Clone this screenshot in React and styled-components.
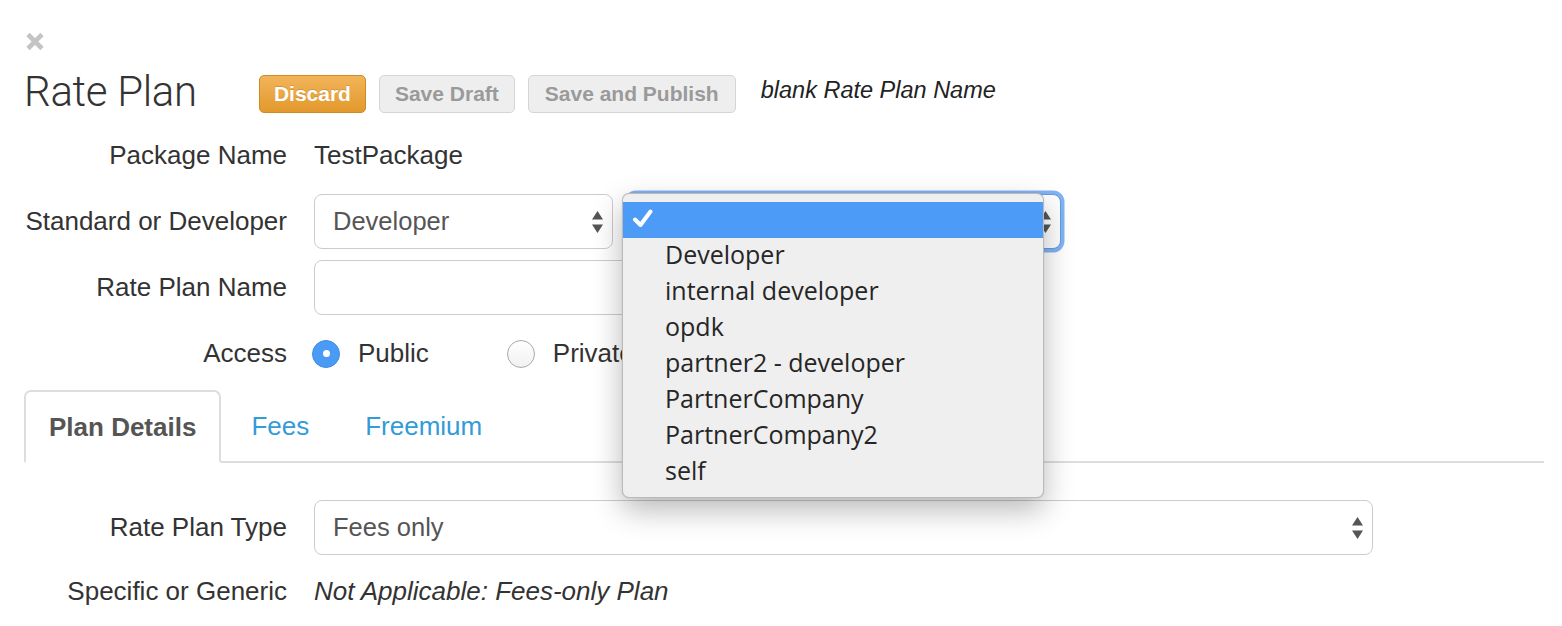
import React from 'react';
import styled, { createGlobalStyle } from 'styled-components';

const GlobalStyle = createGlobalStyle`
  html, body { margin: 0; padding: 0; background: #fff; }
  body { font-family: "Liberation Sans", Arial, sans-serif; color: #333; }
  * { box-sizing: border-box; }
`;

const Page = styled.div`
  position: relative;
  width: 1562px;
  height: 626px;
  overflow: hidden;
  padding: 0 18px 0 24px;
  background: #fff;
`;

const CloseButton = styled.div`
  margin-top: 32px;
  margin-left: 1px;
  width: 20px;
  height: 19px;
  display: block;
  svg { display: block; }
`;

const Header = styled.div`
  margin-top: 24px;
  display: flex;
  align-items: center;
  height: 38px;
`;

const Title = styled.h1`
  margin: 0 62px 0 0;
  font-family: Roboto, "Liberation Sans", sans-serif;
  font-weight: 300;
  font-size: 42px;
  line-height: 38px;
  color: #333;
  letter-spacing: -0.3px;
  position: relative;
  top: -2px;
`;

const Button = styled.button`
  height: 38px;
  padding: 0 ${(p) => p.$pad || 14}px;
  margin-right: 13px;
  border-radius: 5px;
  font-family: "Liberation Sans", Arial, sans-serif;
  font-weight: bold;
  font-size: 21px;
  cursor: pointer;
  ${(p) =>
    p.$variant === 'warning'
      ? `
    background: linear-gradient(#f2b45a, #e3992c);
    border: 1px solid #cf8a24;
    color: #fff;
    text-shadow: 0 -1px 0 rgba(0,0,0,0.15);
  `
      : `
    background: #eeeeee;
    border: 1px solid #d2d6da;
    color: #9a9a9a;
  `}
`;

const Message = styled.span`
  margin-left: 12px;
  font-style: italic;
  font-size: 23.5px;
  color: #222;
  position: relative;
  top: -4px;
`;

const FormGrid = styled.div`
  display: grid;
  grid-template-columns: 263px 1fr;
  column-gap: 27px;
  row-gap: 11px;
  grid-auto-rows: ${(p) => p.$rows || '55px'};
  align-items: center;
  margin-top: ${(p) => p.$top || '0px'};
`;

const Label = styled.div`
  text-align: right;
  font-size: 26px;
  color: #333;
  white-space: nowrap;
`;

const Value = styled.div`
  font-size: 26px;
  color: #333;
  font-style: ${(p) => (p.$italic ? 'italic' : 'normal')};
  white-space: nowrap;
`;

const ControlRow = styled.div`
  display: flex;
  align-items: center;
  gap: 15px;
`;

const SelectBox = styled.div`
  width: ${(p) => p.$width}px;
  height: 55px;
  border: 1px solid ${(p) => (p.$focused ? '#5f9deb' : '#cccccc')};
  border-radius: 8px;
  background: #fff;
  display: flex;
  align-items: center;
  justify-content: space-between;
  padding: 0 8px 0 18px;
  font-size: 25.5px;
  color: #555;
  box-shadow: ${(p) => (p.$focused ? '0 0 0 3.5px rgba(100,160,240,0.8)' : 'none')};
  svg { display: block; flex: none; }
`;

const TextInput = styled.div`
  width: ${(p) => p.$width}px;
  height: 55px;
  border: 1px solid #cccccc;
  border-radius: 8px;
  background: #fff;
`;

const RadioGroup = styled.div`
  display: flex;
  align-items: center;
  margin-left: -2px;
`;

const RadioOption = styled.label`
  display: flex;
  align-items: center;
  gap: 18px;
  margin-right: 78px;
  font-size: 26px;
  color: #333;
`;

const RadioCircle = styled.span`
  width: 28px;
  height: 28px;
  border-radius: 50%;
  display: flex;
  align-items: center;
  justify-content: center;
  ${(p) =>
    p.$checked
      ? `
    background: #4a9bf5;
    border: 1px solid #3f8de6;
  `
      : `
    background: linear-gradient(#ffffff, #f1f1f1);
    border: 1px solid #a9a9a9;
  `}
  &::after {
    content: '';
    width: 7px;
    height: 7px;
    border-radius: 50%;
    background: #fff;
    display: ${(p) => (p.$checked ? 'block' : 'none')};
  }
`;

const TabBar = styled.div`
  margin-top: 9px;
  display: flex;
  align-items: flex-end;
  height: 73px;
  border-bottom: 2px solid #dddddd;
`;

const Tab = styled.div`
  height: 73px;
  margin-right: 4px;
  margin-bottom: -2px;
  display: flex;
  align-items: center;
  font-size: 26px;
  border-radius: 7px 7px 0 0;
  ${(p) =>
    p.$active
      ? `
    padding: 2px 23px 0;
    border: 2px solid #dddddd;
    border-bottom-color: #fff;
    background: #fff;
    color: #555;
    font-weight: bold;
  `
      : `
    padding: 0 24px;
    border: 2px solid transparent;
    color: #339bd8;
  `}
`;

const Dropdown = styled.div`
  position: absolute;
  left: 622px;
  top: 193px;
  width: 422px;
  height: 305px;
  background: #efefef;
  border: 1px solid rgba(0, 0, 0, 0.22);
  border-radius: 7px;
  box-shadow: 0 12px 30px rgba(0, 0, 0, 0.28), 0 0 2px rgba(0, 0, 0, 0.1);
  padding: 8px 0;
  overflow: hidden;
`;

const MenuItem = styled.div`
  position: relative;
  height: 36px;
  display: flex;
  align-items: center;
  padding-left: 42px;
  padding-bottom: 4px;
  font-family: "Open Sans", "Liberation Sans", sans-serif;
  font-size: 25px;
  color: ${(p) => (p.$selected ? '#fff' : '#262626')};
  background: ${(p) => (p.$selected ? '#4b9bf7' : 'transparent')};
  svg {
    position: absolute;
    left: 9px;
    top: 7px;
  }
`;

const Arrows = () => (
  <svg width="13" height="26" viewBox="0 0 13 26">
    <path d="M6.5 2 L12 10.5 L1 10.5 Z" fill="#555" />
    <path d="M6.5 24 L12 15.5 L1 15.5 Z" fill="#555" />
  </svg>
);

const CloseIcon = () => (
  <svg width="20" height="19" viewBox="0 0 20 19">
    <path d="M3 2.5 L17 16.5 M17 2.5 L3 16.5" stroke="#c4c4c4" strokeWidth="4.6" strokeLinecap="butt" />
  </svg>
);

const Check = () => (
  <svg width="22" height="20" viewBox="0 0 22 20">
    <path d="M3 10.5 L8.5 16 L18.5 2.5" stroke="#fff" strokeWidth="4" fill="none" strokeLinecap="round" strokeLinejoin="round" />
  </svg>
);

const options = [
  '',
  'Developer',
  'internal developer',
  'opdk',
  'partner2 - developer',
  'PartnerCompany',
  'PartnerCompany2',
  'self',
];

export default function App() {
  return (
    <>
      <GlobalStyle />
      <Page>
        <CloseButton>
          <CloseIcon />
        </CloseButton>
        <Header>
          <Title>Rate Plan</Title>
          <Button $variant="warning">Discard</Button>
          <Button $pad={15}>Save Draft</Button>
          <Button $pad={16}>Save and Publish</Button>
          <Message>blank Rate Plan Name</Message>
        </Header>

        <FormGrid $top="15px">
          <Label>Package Name</Label>
          <Value>TestPackage</Value>

          <Label>Standard or Developer</Label>
          <ControlRow>
            <SelectBox $width={299}>
              <span>Developer</span>
              <Arrows />
            </SelectBox>
            <SelectBox $width={433} $focused>
              <span />
              <Arrows />
            </SelectBox>
          </ControlRow>

          <Label>Rate Plan Name</Label>
          <TextInput $width={714} />

          <Label>Access</Label>
          <RadioGroup>
            <RadioOption>
              <RadioCircle $checked />
              Public
            </RadioOption>
            <RadioOption>
              <RadioCircle />
              Private
            </RadioOption>
          </RadioGroup>
        </FormGrid>

        <TabBar>
          <Tab $active>Plan Details</Tab>
          <Tab>Fees</Tab>
          <Tab>Freemium</Tab>
        </TabBar>

        <FormGrid $top="37px" $rows="55px 50px">
          <Label>Rate Plan Type</Label>
          <SelectBox $width={1059}>
            <span>Fees only</span>
            <Arrows />
          </SelectBox>

          <Label>Specific or Generic</Label>
          <Value $italic>Not Applicable: Fees-only Plan</Value>
        </FormGrid>

        <Dropdown>
          {options.map((o, i) => (
            <MenuItem key={i} $selected={i === 0}>
              {i === 0 && <Check />}
              {o}
            </MenuItem>
          ))}
        </Dropdown>
      </Page>
    </>
  );
}
